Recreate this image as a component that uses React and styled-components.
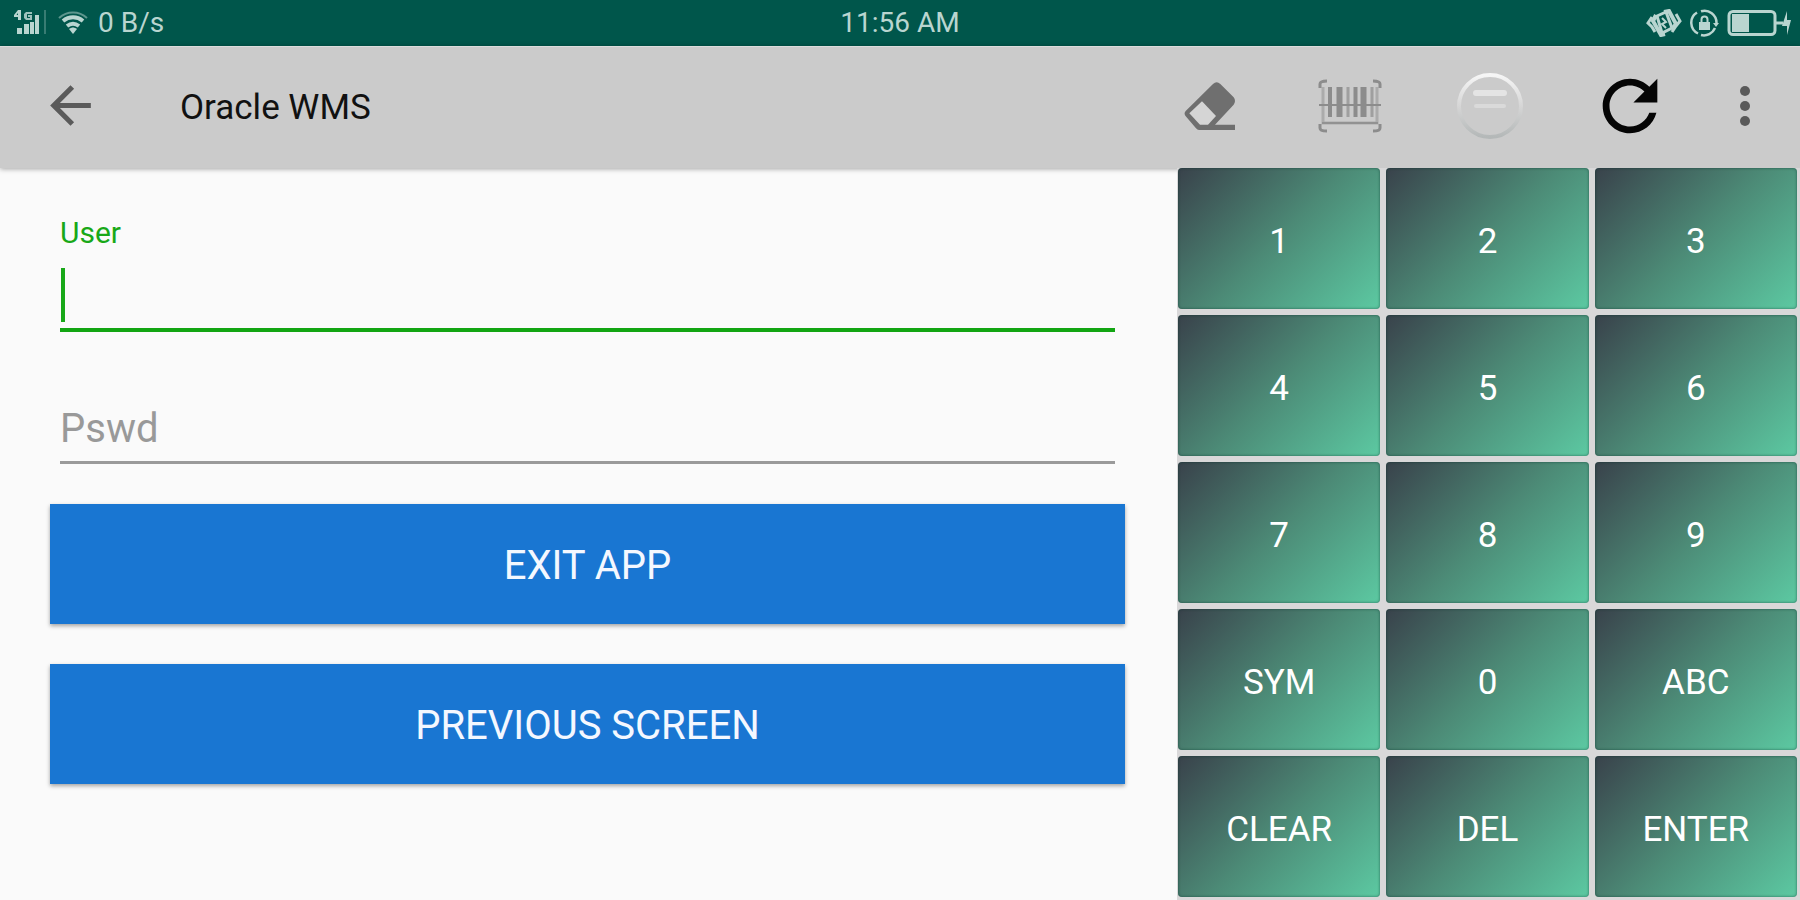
import React from "react";
import styled, { createGlobalStyle } from "styled-components";

const GlobalStyle = createGlobalStyle`
  *, *::before, *::after { box-sizing: border-box; }
  body { margin: 0; background: #fafafa; font-family: Roboto, "Liberation Sans", sans-serif; }
  button, input { font-family: inherit; }
`;

const Page = styled.div`
  display: flex;
  flex-direction: column;
  min-height: 100vh;
`;

const StatusBar = styled.header`
  display: grid;
  grid-template-columns: 1fr auto 1fr;
  align-items: center;
  height: 46px;
  padding: 0 8px;
  background: #00564b;
  color: #b9d5d0;
  font-size: 28px;
  line-height: 32px;
`;

const StatusGroup = styled.div`
  display: flex;
  align-items: center;
  justify-content: ${(p) => (p.$end ? "flex-end" : "flex-start")};
  gap: ${(p) => (p.$end ? "8px" : "10px")};
  padding-left: 6px;
  svg { display: block; }
`;

const Toolbar = styled.div`
  position: relative;
  display: flex;
  align-items: center;
  height: 122px;
  padding-right: 10px;
  background: #cbcbcb;
  border-top: 1px solid #dcdcdc;
  box-shadow: 0 1px 5px rgba(0, 0, 0, 0.35);
`;

const IconButton = styled.button`
  display: flex;
  align-items: center;
  justify-content: center;
  width: ${(p) => (p.$narrow ? "90px" : "140px")};
  height: 100%;
  padding: 0 0 4px;
  border: 0;
  background: none;
  color: ${(p) => p.$color || "#5a5a5a"};
  svg { display: block; }
`;

const Title = styled.h1`
  flex: 1;
  margin: 0;
  padding-left: 40px;
  color: #111;
  font-size: 35px;
  line-height: 44px;
  font-weight: 400;
`;

const Body = styled.main`
  position: relative;
  flex: 1;
  display: grid;
  grid-template-columns: 1175fr 625fr;
`;

const Form = styled.form`
  display: flex;
  flex-direction: column;
  gap: 40px;
  padding: 48px 50px 40px;
`;

const Fields = styled.div`
  display: flex;
  flex-direction: column;
  gap: 64px;
  padding: 0 10px;
`;

const Field = styled.div`
  position: relative;
  display: flex;
  flex-direction: column;
`;

const Label = styled.label`
  color: #18a818;
  font-size: 30px;
  line-height: 34px;
`;

const TextInput = styled.input`
  width: 100%;
  height: ${(p) => (p.$active ? "82px" : "68px")};
  padding: 0;
  border: 0;
  border-bottom: ${(p) => (p.$active ? "4px solid #12a512" : "3px solid #9a9a9a")};
  border-radius: 0;
  outline: 0;
  background: none;
  color: #222;
  caret-color: transparent;
  font-size: 40px;
  &::placeholder { color: #999; opacity: 1; }
`;

const Caret = styled.span`
  position: absolute;
  left: 1px;
  bottom: 10px;
  width: 4px;
  height: 54px;
  background: #18a818;
`;

const ActionButton = styled.button`
  height: 120px;
  padding: 4px 0 0;
  border: 0;
  background: #1976d2;
  box-shadow: 0 2px 4px rgba(0, 0, 0, 0.35);
  color: #f4f8ff;
  font-size: 40px;
  line-height: 48px;
`;

const Keypad = styled.section`
  display: grid;
  grid-template-columns: repeat(3, 1fr);
  grid-auto-rows: 1fr;
  gap: 6px;
  margin-left: 2px;
  padding: 0 3px 3px 1px;
  background: #d9d8d9;
`;

const Key = styled.button`
  min-height: 80px;
  padding: 6px 0 0;
  border: 0;
  border-radius: 4px;
  background: linear-gradient(135deg, #39424b, #4c8a76 50%, #5cc9a2);
  box-shadow: inset 0 0 3px rgba(0, 50, 40, 0.6);
  color: #fff;
  font-size: 35px;
  line-height: 40px;
`;

const SignalIcon = () => (
  <svg width="34" height="26" viewBox="0 0 34 26" fill="currentColor" aria-hidden="true">
    <path d="M4 0h3v10H4V7H0V5zM2.500 5H4V3z" fillRule="evenodd" />
    <path d="M18 2h-6l-2 2v4l2 2h6V5h-4v2h2v1h-3V4h5z" opacity=".85" />
    <path d="M3 18h5v6H3zM10 14h5v10h-5zM16 12h4v12h-4zM21 5h4v19h-4z" />
    <path d="M30 0h2v24h-2z" opacity=".3" />
  </svg>
);

const WifiIcon = () => (
  <svg width="30" height="24" viewBox="0 0 30 24" fill="none" stroke="currentColor" aria-hidden="true">
    <path d="M1 7C9-.5 21-.5 29 7" strokeWidth="2" opacity=".5" />
    <path d="M5 10c6-5 14-5 20 0" strokeWidth="4" />
    <path d="M9 15c4-3 8-3 12 0" strokeWidth="4" />
    <path d="M11 18c3-2 5-2 8 0l-4 5z" fill="currentColor" stroke="none" />
  </svg>
);

const VibrateIcon = () => (
  <svg width="36" height="28" viewBox="0 0 36 28" fill="none" stroke="currentColor" aria-hidden="true">
    <path d="M6 8l-4 6 4 4 3 5M30 5l4 7-4 5-4 6" strokeWidth="3" />
    <path d="M10 6l-3 6 8 14 4-1M18 3l5-1 7 13-4 5" strokeWidth="4" />
    <path d="M11 7l9-4 6 16-10 5z" strokeWidth="3" />
    <path d="M16 9l4 4-4 2 4 4" strokeWidth="2" />
  </svg>
);

const RotationLockIcon = () => (
  <svg width="29" height="28" viewBox="0 0 29 28" fill="none" stroke="currentColor" aria-hidden="true">
    <path d="M7 3.500A12 12 0 0 0 8 24.500M11 26a12 12 0 0 0 14-7M26.500 14A12 12 0 0 0 11 2.300" strokeWidth="2.500" />
    <path d="M23 14h6l-3 4z" fill="currentColor" stroke="none" />
    <path d="M9 13h11v8H9z" fill="currentColor" stroke="none" />
    <path d="M11.500 13v-2.500a3 3 0 0 1 6 0V13" strokeWidth="2" />
  </svg>
);

const BatteryIcon = () => (
  <svg width="65" height="28" viewBox="0 0 65 28" fill="none" stroke="currentColor" aria-hidden="true">
    <rect x="2" y="2.500" width="46" height="23" rx="4" strokeWidth="3" />
    <path d="M5 5h17v18H5z" fill="currentColor" stroke="none" />
    <path d="M49 14h7" strokeWidth="3" />
    <path d="M60 2v9h4l-4 15v-9h-5z" fill="currentColor" stroke="none" />
  </svg>
);

const BackIcon = () => (
  <svg width="61" height="61" viewBox="0 0 24 24" fill="currentColor" aria-hidden="true">
    <path d="M20 11H7.830l5.590-5.590L12 4l-8 8 8 8 1.410-1.410L7.830 13H20z" />
  </svg>
);

const EraserIcon = () => (
  <svg width="52" height="50" viewBox="0 0 156 150" aria-hidden="true">
    <path
      d="M5 90 87 9q11-10 22 0l40 40q8 11 0 22L93 131h60v16H45q-5 0-9-5L4 104q-5-7 1-14z"
      fill="#6f6f6f"
    />
    <path d="M16 97 54 61l42 44-24 26H48z" fill="#d5d5d5" />
  </svg>
);

const BarcodeIcon = () => (
  <svg width="64" height="54" viewBox="0 0 64 54" fill="none" stroke="currentColor" aria-hidden="true">
    <path d="M2 9V5q0-3 7-3M55 2q7 0 7 3v4M2 45v4q0 3 7 3M55 52q7 0 7-3v-4" strokeWidth="3" />
    <path d="M5 8v36h54V8" strokeWidth="3" opacity=".5" />
    <path d="M12 8v30M37.500 8v30" strokeWidth="4" />
    <path d="M21.500 8v30M45.500 8v30" strokeWidth="6" />
    <path d="M30 8v30M54 8v30" strokeWidth="3" opacity=".7" />
    <path d="M1 26h62" strokeWidth="2" />
    <path d="M4 44h56" strokeWidth="2" opacity=".8" />
  </svg>
);

const BubbleIcon = () => (
  <svg width="68" height="68" viewBox="0 0 68 68" fill="none" aria-hidden="true">
    <defs>
      <linearGradient id="ring" x1="0" y1="0" x2="0" y2="1">
        <stop offset="0" stopColor="#f6f6f6" />
        <stop offset=".5" stopColor="#d6d6d6" />
        <stop offset="1" stopColor="#b4b8b8" />
      </linearGradient>
    </defs>
    <circle cx="34" cy="34" r="31" stroke="url(#ring)" strokeWidth="4" />
    <path d="M20 21h28" stroke="#e4e4e4" strokeWidth="6" strokeLinecap="round" />
    <path d="M20 34h28" stroke="#dadada" strokeWidth="4" strokeLinecap="round" />
  </svg>
);

const RefreshIcon = () => (
  <svg width="82" height="82" viewBox="0 0 24 24" fill="currentColor" aria-hidden="true">
    <path d="M17.650 6.350C16.200 4.900 14.210 4 12 4c-4.420 0-7.990 3.580-7.990 8s3.570 8 7.990 8c3.730 0 6.840-2.550 7.730-6h-2.080c-.82 2.330-3.040 4-5.650 4-3.310 0-6-2.690-6-6s2.690-6 6-6c1.660 0 3.140.69 4.220 1.780L13 11h7V4z" />
  </svg>
);

const MoreIcon = () => (
  <svg width="60" height="60" viewBox="0 0 24 24" fill="currentColor" aria-hidden="true">
    <circle cx="12" cy="6" r="2" />
    <circle cx="12" cy="12" r="2" />
    <circle cx="12" cy="18" r="2" />
  </svg>
);

const KEYS = ["1", "2", "3", "4", "5", "6", "7", "8", "9", "SYM", "0", "ABC", "CLEAR", "DEL", "ENTER"];

export default function App() {
  return (
    <Page>
      <GlobalStyle />
      <StatusBar>
        <StatusGroup>
          <SignalIcon />
          <WifiIcon />
          <span>0 B/s</span>
        </StatusGroup>
        <time>11:56 AM</time>
        <StatusGroup $end>
          <VibrateIcon />
          <RotationLockIcon />
          <BatteryIcon />
        </StatusGroup>
      </StatusBar>
      <Toolbar>
        <IconButton type="button" aria-label="Back"><BackIcon /></IconButton>
        <Title>Oracle WMS</Title>
        <IconButton type="button" aria-label="Erase"><EraserIcon /></IconButton>
        <IconButton type="button" aria-label="Scan barcode" $color="#8c8c8c"><BarcodeIcon /></IconButton>
        <IconButton type="button" aria-label="Messages"><BubbleIcon /></IconButton>
        <IconButton type="button" aria-label="Refresh" $color="#050505"><RefreshIcon /></IconButton>
        <IconButton type="button" aria-label="More options" $narrow><MoreIcon /></IconButton>
      </Toolbar>
      <Body>
        <Form onSubmit={(e) => e.preventDefault()}>
          <Fields>
            <Field>
              <Label htmlFor="user">User</Label>
              <TextInput id="user" type="text" autoComplete="off" $active />
              <Caret />
            </Field>
            <Field>
              <TextInput id="pswd" type="password" placeholder="Pswd" aria-label="Pswd" />
            </Field>
          </Fields>
          <ActionButton type="button">EXIT APP</ActionButton>
          <ActionButton type="button">PREVIOUS SCREEN</ActionButton>
        </Form>
        <Keypad aria-label="Keypad">
          {KEYS.map((k) => (
            <Key key={k} type="button">{k}</Key>
          ))}
        </Keypad>
      </Body>
    </Page>
  );
}
